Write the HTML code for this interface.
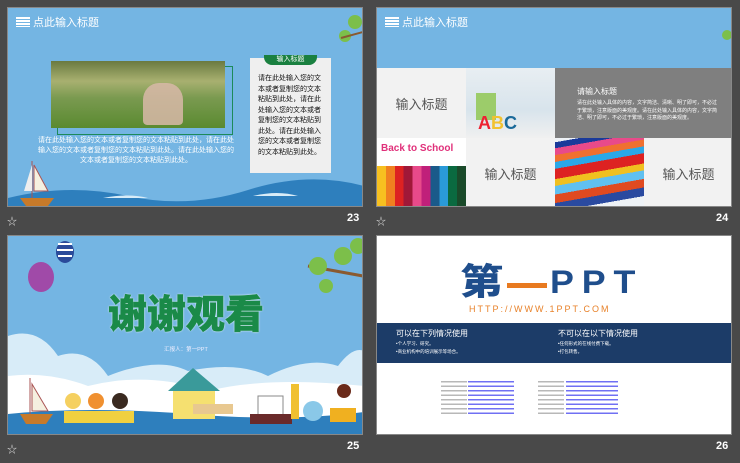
<!DOCTYPE html>
<html><head><meta charset="utf-8"><style>
*{margin:0;padding:0;box-sizing:border-box}
body{width:740px;height:463px;background:#494949;position:relative;overflow:hidden;font-family:"Liberation Sans","Noto Sans CJK SC",sans-serif}
.s{position:absolute;width:356px;height:200px;overflow:hidden;border:1px solid #888}
.blue{background:#74b5e3}
.a{position:absolute}
.num{position:absolute;color:#fff;font-size:11px;font-weight:bold}
.star{position:absolute;color:#ddd;font-size:10px}
.tt{position:absolute;left:8px;top:6px;color:#fff;font-size:11px;display:flex;align-items:center;gap:3px}
.ic{width:14px;height:10px;background:repeating-linear-gradient(#fff 0 2px,transparent 2px 3px)}
.g{background:#f2f2f2;color:#555;font-size:13px;display:flex;align-items:center;justify-content:center}
</style></head><body>

<!-- slide 23 -->
<div class="s blue" style="left:7px;top:7px">
 <div class="tt"><div class="ic"></div>点此输入标题</div>
 <div class="a" style="left:49px;top:58px;width:176px;height:69px;border:1px solid #1d8a5a"></div>
 <div class="a" style="left:43px;top:53px;width:174px;height:67px;background:linear-gradient(180deg,#6a7a40 0%,#a8b070 30%,#7a9a50 55%,#5a8a30 100%)"></div>
 <div class="a" style="left:135px;top:75px;width:40px;height:42px;background:#d8b8a8;border-radius:40% 40% 10% 10%;opacity:.85"></div>
 <div class="a" style="left:30px;top:128px;width:196px;color:#fff;font-size:7px;line-height:10px;text-align:center">请在此处输入您的文本或者复制您的文本粘贴到此处，请在此处输入您的文本或者复制您的文本粘贴到此处。请在此处输入您的文本或者复制您的文本粘贴到此处。</div>
 <div class="a" style="left:242px;top:50px;width:81px;height:115px;background:#efefef"></div>
 <div class="a" style="left:256px;top:47px;width:53px;height:10px;background:#1a8040;border-radius:0 0 8px 8px;color:#fff;font-size:7px;text-align:center;line-height:10px">输入标题</div>
 <div class="a" style="left:250px;top:66px;width:66px;color:#111;font-size:7px;line-height:10.5px">请在此处输入您的文本或者复制您的文本粘贴到此处，请在此处输入您的文本或者复制您的文本粘贴到此处。请在此处输入您的文本或者复制您的文本粘贴到此处。</div>
 <svg class="a" style="left:0;top:170px" width="356" height="30"><path d="M0 20 Q60 5 120 18 T240 12 T356 8 V30 H0Z" fill="#2e7fbd"/><path d="M95 20 Q120 15 140 20Z M245 18 Q270 12 290 18Z" fill="#d8ecf8"/></svg>
 <svg class="a" style="left:10px;top:145px" width="40" height="55"><path d="M14 8 V45 M16 12 L30 38 H16Z" stroke="#a55" fill="#f5f0e0"/><path d="M14 12 L6 38 H14Z" fill="#eee"/><path d="M2 45 H36 L30 53 H8Z" fill="#c77a2a"/></svg>
 <svg class="a" style="left:325px;top:4px" width="30" height="36"><circle cx="12" cy="24" r="6" fill="#7cbf4a"/><circle cx="22" cy="10" r="7" fill="#7cbf4a"/><path d="M8 26 L30 20" stroke="#8a5a30" stroke-width="2"/></svg>
</div>
<div class="star" style="left:7px;top:213px">☆</div><div class="num" style="left:347px;top:212px">23</div>

<!-- slide 24 -->
<div class="s" style="left:376px;top:7px;background:#f2f2f2">
 <div class="a blue" style="left:0;top:0;width:356px;height:60px"></div>
 <div class="tt"><div class="ic"></div>点此输入标题</div>
 <div class="a g" style="left:0;top:60px;width:89px;height:70px">输入标题</div>
 <div class="a" style="left:89px;top:60px;width:89px;height:70px;background:linear-gradient(#e8eef2,#d8e4ec 60%,#f0f0f0)">
  <div class="a" style="left:10px;top:25px;width:20px;height:27px;background:#9ccc6a"></div>
  <div class="a" style="left:12px;top:45px;font-size:18px;font-weight:bold;color:#e23"><span>A</span><span style="color:#f2c230">B</span><span style="color:#1a6a9a">C</span></div>
 </div>
 <div class="a" style="left:178px;top:60px;width:178px;height:70px;background:#7f7f7f;color:#fff">
  <div class="a" style="left:22px;top:18px;font-size:8px">请输入标题</div>
  <div class="a" style="left:22px;top:32px;width:140px;font-size:5px;line-height:7.5px">请在此处输入具体的内容，文字简洁、清晰、明了即可，不必过于繁琐，注意版面的美观度。请在此处输入具体的内容，文字简洁、明了即可，不必过于繁琐，注意版面的美观度。</div>
 </div>
 <div class="a" style="left:0;top:130px;width:89px;height:70px;background:linear-gradient(#fff 0 40%,transparent 40%),linear-gradient(90deg,#f7c020 0 10%,#f08020 10% 20%,#d22 20% 30%,#a01838 30% 40%,#e84a8a 40% 50%,#c0207a 50% 60%,#1a5a8a 60% 70%,#2a9ad8 70% 80%,#0a6a40 80% 90%,#1a4a2a 90%)">
  <div class="a" style="left:4px;top:5px;font-size:10px;color:#e0307a;font-weight:bold">Back to School</div>
 </div>
 <div class="a g" style="left:89px;top:130px;width:89px;height:70px">输入标题</div>
 <div class="a" style="left:178px;top:130px;width:89px;height:70px;background:linear-gradient(170deg,#eef2f6 0 5%,#1a3a9a 5% 12%,#e84a8a 12% 20%,#f07030 20% 28%,#2aa8e8 28% 36%,#d22 36% 48%,#f0c020 48% 56%,#60c0f0 56% 66%,#e04a20 66% 76%,#2a4aa0 76% 86%,#eef2f6 86%)"></div>
 <div class="a g" style="left:267px;top:130px;width:89px;height:70px">输入标题</div>
 <svg class="a" style="left:344px;top:20px" width="12" height="14"><circle cx="6" cy="7" r="5" fill="#7cbf4a"/></svg>
</div>
<div class="star" style="left:376px;top:213px">☆</div><div class="num" style="left:716px;top:212px">24</div>

<!-- slide 25 -->
<div class="s blue" style="left:7px;top:235px">
 <svg class="a" style="left:0;top:0" width="356" height="200">
  <path d="M0 100 Q30 90 50 120 Q80 110 100 140 Q150 120 180 135 Q230 125 260 140 Q300 120 330 130 Q345 110 356 115 V200 H0Z" fill="#d8ecf8"/>
  <path d="M0 140 Q40 135 80 150 Q140 135 200 155 Q260 140 356 150 V200 H0Z" fill="#fff"/>
  <path d="M0 178 Q80 170 180 178 T356 176 V200 H0Z" fill="#2e7fbd"/>
  <ellipse cx="33" cy="41" rx="13" ry="15" fill="#a04aa8"/><ellipse cx="57" cy="16" rx="9" ry="11" fill="#2a4a9a"/><path d="M50 8 H64 M49 14 H65 M50 20 H64" stroke="#fff" stroke-width="2"/>
  <path d="M300 30 L355 40" stroke="#8a5a30" stroke-width="3"/><circle cx="310" cy="30" r="9" fill="#7cbf4a"/><circle cx="335" cy="20" r="9" fill="#7cbf4a"/><circle cx="350" cy="10" r="8" fill="#7cbf4a"/><circle cx="318" cy="50" r="7" fill="#7cbf4a"/>
  <path d="M22 142 V180 M24 148 L40 175 H24Z" stroke="#a55" fill="#f5f0e0"/><path d="M12 178 H45 L38 188 H18Z" fill="#c77a2a"/>
  <circle cx="65" cy="165" r="8" fill="#f5d060"/><circle cx="88" cy="165" r="8" fill="#f09030"/><circle cx="112" cy="165" r="8" fill="#3a2a20"/>
  <rect x="56" y="175" width="70" height="12" fill="#f0d040"/>
  <path d="M160 155 L185 132 L212 155Z" fill="#3a9a9a"/><rect x="165" y="155" width="42" height="28" fill="#f5e070"/><rect x="185" y="168" width="40" height="10" fill="#e8c890"/>
  <rect x="250" y="160" width="25" height="25" fill="#fff" stroke="#888"/><rect x="242" y="178" width="42" height="10" fill="#6a2a2a"/>
  <rect x="283" y="148" width="8" height="35" fill="#f0c030"/><ellipse cx="305" cy="175" rx="10" ry="10" fill="#8ac8e8"/>
  <circle cx="336" cy="155" r="7" fill="#6a2a1a"/><rect x="322" y="172" width="26" height="14" fill="#f0b020"/>
 </svg>
 <div class="a" style="left:0;top:58px;width:356px;text-align:center;color:#1a8a48;font-size:39px;line-height:44px;font-weight:900;-webkit-text-stroke:0.6px #1a8a48;text-shadow:0 0 2px #fff,0 0 1px #fff">谢谢观看</div>
 <div class="a" style="left:0;top:109px;width:356px;text-align:center;color:#eef;font-size:5.5px">汇报人：第一PPT</div>
</div>
<div class="star" style="left:7px;top:441px">☆</div><div class="num" style="left:347px;top:440px">25</div>

<!-- slide 26 -->
<div class="s" style="left:376px;top:235px;background:#fff">
 <div class="a" style="left:83px;top:26px;color:#1f4e8c;font-size:36px;font-weight:900;line-height:40px;transform:scaleX(1.2);transform-origin:left">第</div>
 <div class="a" style="left:130px;top:47px;width:40px;height:5px;background:#e87a20"></div>
 <div class="a" style="left:173px;top:28px;color:#1f4e8c;font-size:32px;font-weight:900;line-height:36px;letter-spacing:7px;transform:scaleX(1.12);transform-origin:left">PPT</div>
 <div class="a" style="left:92px;top:68px;color:#e8822a;font-size:9px;letter-spacing:2px">HTTP://WWW.1PPT.COM</div>
 <div class="a" style="left:0;top:87px;width:356px;height:40px;background:#1c3c68;color:#fff">
  <div class="a" style="left:19px;top:5px;font-size:8px">可以在下列情况使用</div>
  <div class="a" style="left:19px;top:17px;font-size:4.5px;line-height:8px">•个人学习、研究。<br>•商业机构中的培训展示等场合。</div>
  <div class="a" style="left:181px;top:5px;font-size:8px">不可以在以下情况使用</div>
  <div class="a" style="left:181px;top:17px;font-size:4.5px;line-height:8px">•任何形式的在线付费下载。<br>•打包转售。</div>
 </div>
 <div class="a" style="left:64px;top:145px;width:26px;height:34px;background:repeating-linear-gradient(#999 0 1.5px,transparent 1.5px 4.5px);opacity:.7"></div>
 <div class="a" style="left:91px;top:145px;width:46px;height:34px;background:repeating-linear-gradient(#33e 0 1.5px,transparent 1.5px 4.5px);opacity:.7"></div>
 <div class="a" style="left:161px;top:145px;width:26px;height:34px;background:repeating-linear-gradient(#999 0 1.5px,transparent 1.5px 4.5px);opacity:.7"></div>
 <div class="a" style="left:189px;top:145px;width:52px;height:34px;background:repeating-linear-gradient(#33e 0 1.5px,transparent 1.5px 4.5px);opacity:.7"></div>
</div>
<div class="num" style="left:716px;top:440px">26</div>
</body></html>
